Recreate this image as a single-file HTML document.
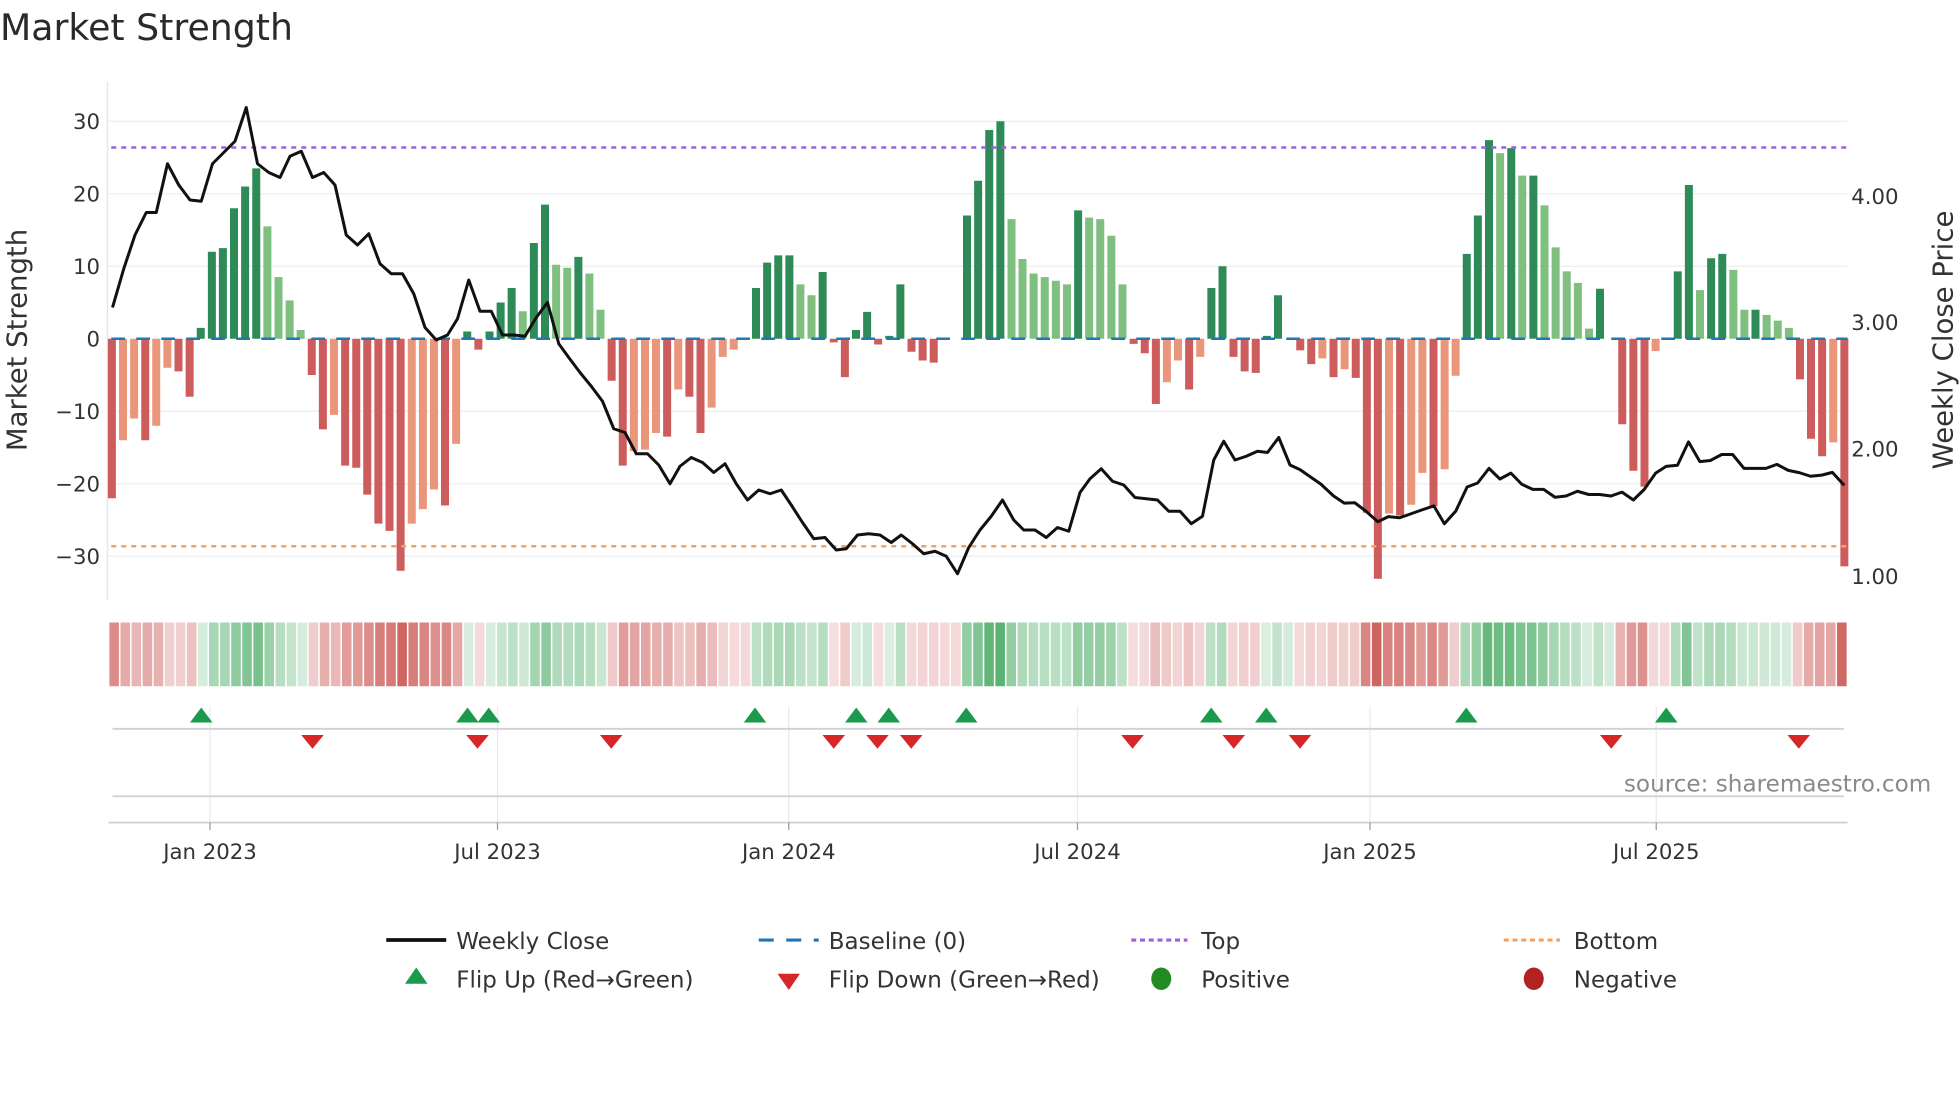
<!DOCTYPE html>
<html><head><meta charset="utf-8"><style>
html,body{margin:0;padding:0;background:#fff;}
svg{display:block;font-family:"DejaVu Sans","Liberation Sans",sans-serif;}
</style></head><body>
<svg id="s" width="1960" height="1102" viewBox="0 0 1568 881.6" xmlns="http://www.w3.org/2000/svg">
<rect width="1568" height="881.6" fill="#fff"/>
<text x="0" y="32" font-size="29" fill="#2a2a2a">Market Strength</text>
<g stroke="#edf0f5" stroke-width="1.2">
<line x1="87" x2="1478" y1="97" y2="97"/><line x1="87" x2="1478" y1="155" y2="155"/><line x1="87" x2="1478" y1="213" y2="213"/>
<line x1="87" x2="1478" y1="329" y2="329"/><line x1="87" x2="1478" y1="387" y2="387"/><line x1="87" x2="1478" y1="445" y2="445"/>
</g>
<line x1="86" x2="86" y1="65" y2="480" stroke="#e6e8ec" stroke-width="1.2"/>
<g font-size="17" fill="#333" text-anchor="end">
<text x="80" y="103">30</text><text x="80" y="161">20</text><text x="80" y="219">10</text><text x="80" y="277">0</text>
<text x="80" y="335">−10</text><text x="80" y="393">−20</text><text x="80" y="451">−30</text>
</g>
<g font-size="17" fill="#333">
<text x="1481" y="163">4.00</text><text x="1481" y="264">3.00</text><text x="1481" y="365">2.00</text><text x="1481" y="467">1.00</text>
</g>
<text transform="translate(21,272) rotate(-90)" font-size="22" fill="#333" text-anchor="middle">Market Strength</text>
<text transform="translate(1562,272) rotate(-90)" font-size="22" fill="#333" text-anchor="middle">Weekly Close Price</text>
<g id="bars"></g>
<line x1="89" x2="1478" y1="271" y2="271" stroke="#1f77b4" stroke-width="2" stroke-dasharray="11,9"/>
<line x1="89" x2="1478" y1="118" y2="118" stroke="#9b5fe0" stroke-width="2" stroke-dasharray="4,4"/>
<line x1="89" x2="1478" y1="437" y2="437" stroke="#f4a261" stroke-width="2" stroke-dasharray="4,4"/>
<polyline id="price" fill="none" stroke="#111" stroke-width="2.4" stroke-linejoin="round"/>
<g id="strip"></g>
<g stroke="#e8eaee" stroke-width="1">
<line x1="168" x2="168" y1="565" y2="660"/><line x1="398" x2="398" y1="565" y2="660"/><line x1="631" x2="631" y1="565" y2="660"/>
<line x1="862" x2="862" y1="565" y2="660"/><line x1="1096" x2="1096" y1="565" y2="660"/><line x1="1325" x2="1325" y1="565" y2="660"/>
</g>
<line x1="90" x2="1475" y1="583" y2="583" stroke="#cfd1d5" stroke-width="1.5"/>
<line x1="90" x2="1475" y1="637" y2="637" stroke="#cfd1d5" stroke-width="1.5"/>
<line x1="87" x2="1478" y1="658" y2="658" stroke="#cfd1d5" stroke-width="1.5"/>
<g stroke="#999" stroke-width="1"><line x1="168" x2="168" y1="658" y2="664"/><line x1="398" x2="398" y1="658" y2="664"/><line x1="631" x2="631" y1="658" y2="664"/><line x1="862" x2="862" y1="658" y2="664"/><line x1="1096" x2="1096" y1="658" y2="664"/><line x1="1325" x2="1325" y1="658" y2="664"/></g>
<g id="mk"></g>
<text x="1545" y="633" font-size="18.5" fill="#8a8a8a" text-anchor="end">source: sharemaestro.com</text>
<g font-size="17" fill="#333" text-anchor="middle">
<text x="168" y="687">Jan 2023</text><text x="398" y="687">Jul 2023</text><text x="631" y="687">Jan 2024</text>
<text x="862" y="687">Jul 2024</text><text x="1096" y="687">Jan 2025</text><text x="1325" y="687">Jul 2025</text>
</g>
<g font-size="18.4" fill="#333">
<line x1="309" x2="357" y1="752" y2="752" stroke="#111" stroke-width="3"/><text x="365" y="759">Weekly Close</text>
<line x1="607" x2="655" y1="752" y2="752" stroke="#1f77b4" stroke-width="2.5" stroke-dasharray="12,10"/><text x="663" y="759">Baseline (0)</text>
<line x1="905" x2="950" y1="752" y2="752" stroke="#9b5fe0" stroke-width="2.5" stroke-dasharray="4,3"/><text x="961" y="759">Top</text>
<line x1="1203" x2="1248" y1="752" y2="752" stroke="#f4a261" stroke-width="2.5" stroke-dasharray="4,3"/><text x="1259" y="759">Bottom</text>
<polygon points="333,774 324,787 342,787" fill="#1a9a4a"/><text x="365" y="790">Flip Up (Red→Green)</text>
<polygon points="622,779 640,779 631,792" fill="#d62728"/><text x="663" y="790">Flip Down (Green→Red)</text>
<ellipse cx="929" cy="783" rx="8" ry="9" fill="#228b22"/><text x="961" y="790">Positive</text>
<ellipse cx="1227" cy="783" rx="8" ry="9" fill="#b22222"/><text x="1259" y="790">Negative</text>
</g>
</svg>
<script>
var D="#2e8b57",L="#7fbf7f",R="#cd5c5c",O="#e9967a";
var v=[[-22,R],[-14,O],[-11,O],[-14,R],[-12,O],[-4,O],[-4.5,R],[-8,R],[1.5,D],[12,D],[12.5,D],[18,D],[21,D],[23.5,D],[15.5,L],[8.5,L],[5.3,L],[1.2,L],[-5,R],[-12.5,R],[-10.5,O],[-17.5,R],[-17.8,R],[-21.5,R],[-25.5,R],[-26.5,R],[-32,R],[-25.5,O],[-23.5,O],[-20.8,O],[-23,R],[-14.5,O],[1,D],[-1.5,R],[1,D],[5,D],[7,D],[3.8,L],[13.2,D],[18.5,D],[10.2,L],[9.8,L],[11.3,D],[9,L],[4,L],[-5.8,R],[-17.5,R],[-15.5,O],[-15.3,O],[-13,O],[-13.5,R],[-7,O],[-8,R],[-13,R],[-9.5,O],[-2.5,O],[-1.5,O],[0,R],[7,D],[10.5,D],[11.5,D],[11.5,D],[7.5,L],[6,L],[9.2,D],[-0.5,R],[-5.3,R],[1.2,D],[3.7,D],[-0.8,R],[0.4,D],[7.5,D],[-1.8,R],[-3,R],[-3.3,R],[0,R],[0,D],[17,D],[21.8,D],[28.8,D],[30,D],[16.5,L],[11,L],[9,L],[8.5,L],[8,L],[7.5,L],[17.7,D],[16.7,L],[16.5,L],[14.2,L],[7.5,L],[-0.7,R],[-2,R],[-9,R],[-6,O],[-3,O],[-7,R],[-2.5,O],[7,D],[10,D],[-2.5,R],[-4.5,R],[-4.7,R],[0.4,D],[6,D],[0,R],
[-1.6,R],[-3.5,R],[-2.7,O],[-5.3,R],[-4.2,O],[-5.4,R],[-24,R],[-33.1,R],[-24.1,O],[-24.4,R],[-22.9,O],[-18.5,O],[-23.1,R],[-18,O],[-5.1,O],[11.7,D],[17,D],[27.4,D],[25.6,L],[26.3,D],[22.5,L],[22.5,D],[18.4,L],[12.6,L],[9.3,L],[7.7,L],[1.4,L],[6.9,D],[0,D],[-11.8,R],[-18.2,R],[-20.4,R],[-1.7,O],[0,R],[9.3,D],[21.2,D],[6.7,L],[11.1,D],[11.7,D],[9.5,L],[4,L],[4,D],[3.3,L],[2.5,L],[1.5,L],[-5.6,R],[-13.8,R],[-16.2,R],[-14.3,O],[-31.4,R]];
var n=v.length,sp=(1475.5-89.5)/(n-1),b="",st="";
var sw=(1478-87)/n;
for(var i=0;i<n;i++){var x=89.5+sp*i,val=v[i][0],h=Math.abs(val)*5.8;
 if(h>0.3)b+='<rect x="'+(x-3.2).toFixed(1)+'" y="'+(val>0?271-h:271).toFixed(1)+'" width="6.4" height="'+h.toFixed(1)+'" fill="'+v[i][1]+'"/>';
 var g=(v[i][1]==D||v[i][1]==L),a=Math.min(0.9,0.18+Math.abs(val)/45);
 if(val==0){g=(i>0&&(v[i-1][1]==D||v[i-1][1]==L));a=0.22;}
 st+='<rect x="'+(87+sw*i+0.5).toFixed(2)+'" y="498" width="'+(sw-1.2).toFixed(2)+'" height="51" fill="'+(g?"#3ea65a":"#c9534f")+'" fill-opacity="'+a.toFixed(2)+'"/>';}
document.getElementById("bars").innerHTML=b;document.getElementById("strip").innerHTML=st;
var p1=[[90,246],[99,215],[108,188],[117,170],[125,170],[134,131],[143,148],[152,160],[161,161],[170,131],[179,122],[188,113],[197,86],[206,131],[215,138],[224,142],[232,125],[241,121],[250,142],[259,138],[268,148],[277,188],[286,196],[295,187],[304,211],[313,219],[322,219],[331,235],[340,262],[349,272],[358,268],[366,255],[375,224],[384,249],[393,249],[402,268],[411,268],[420,269],[429,254],[438,242],[447,275],[455,286],[464,298],[473,309],[482,321],[491,343],[500,346],[509,363],[518,363],[527,372],[536,387],[544,373],[553,366],[562,370],[571,378],[580,371],[589,387],[598,400],[607,392],[616,395],[625,392],[633,404],[642,418],[651,431],[660,430],[669,440],[677,439],[686,428],[695,427],[704,428],[713,434],[721,428],[730,435],[739,443],[748,441],[757,445],[766,459],[775,438],[784,424],[793,413],[802,400],[811,416],[819,424],[828,424],[837,430],[846,422],[855,425],[864,394],[872,383],[881,375],[890,385],[899,388],[908,398],[917,399],[926,400],[935,409],[944,409],[953,419],[962,413],[971,368],[979,353],[988,368],[997,365],[1006,361],[1014,362],[1023,350],[1032,372]];
var z=[[0,1188],[50,1225],[80,1255],[105,1273],[130,1272],[155,1292],[185,1320],[210,1307],[237,1310],[290,1290],[318,1280],[343,1325],[370,1293],[397,1232],[422,1222],[449,1185],[475,1212],[501,1197],[527,1225],[553,1238],[579,1238],[606,1258],[632,1255],[659,1243],[686,1251],[712,1251],[739,1255],[765,1245],[792,1265],[818,1238],[845,1197],[870,1180],[897,1177],[923,1118],[950,1168],[975,1165],[1002,1150],[1028,1150],[1055,1185],[1080,1185],[1107,1185],[1133,1175],[1160,1190],[1187,1196],[1213,1205],[1240,1202],[1265,1195],[1293,1228]];
var pts=p1.map(function(q){return q[0]+","+q[1]});
z.forEach(function(q){pts.push(((1300+q[0]/2.376)/1.25).toFixed(1)+","+(q[1]/3.1625).toFixed(1))});
document.getElementById("price").setAttribute("points",pts.join(" "));
var up=[161,374,391,604,685,711,773,969,1013,1173,1333],dn=[250,382,489,667,702,729,906,987,1040,1289,1439],m="";
up.forEach(function(x){m+='<polygon points="'+x+',566 '+(x-9)+',578 '+(x+9)+',578" fill="#1a9a4a"/>'});
dn.forEach(function(x){m+='<polygon points="'+(x-9)+',588 '+(x+9)+',588 '+x+',599" fill="#d62728"/>'});
document.getElementById("mk").innerHTML=m;
</script>
</body></html>
